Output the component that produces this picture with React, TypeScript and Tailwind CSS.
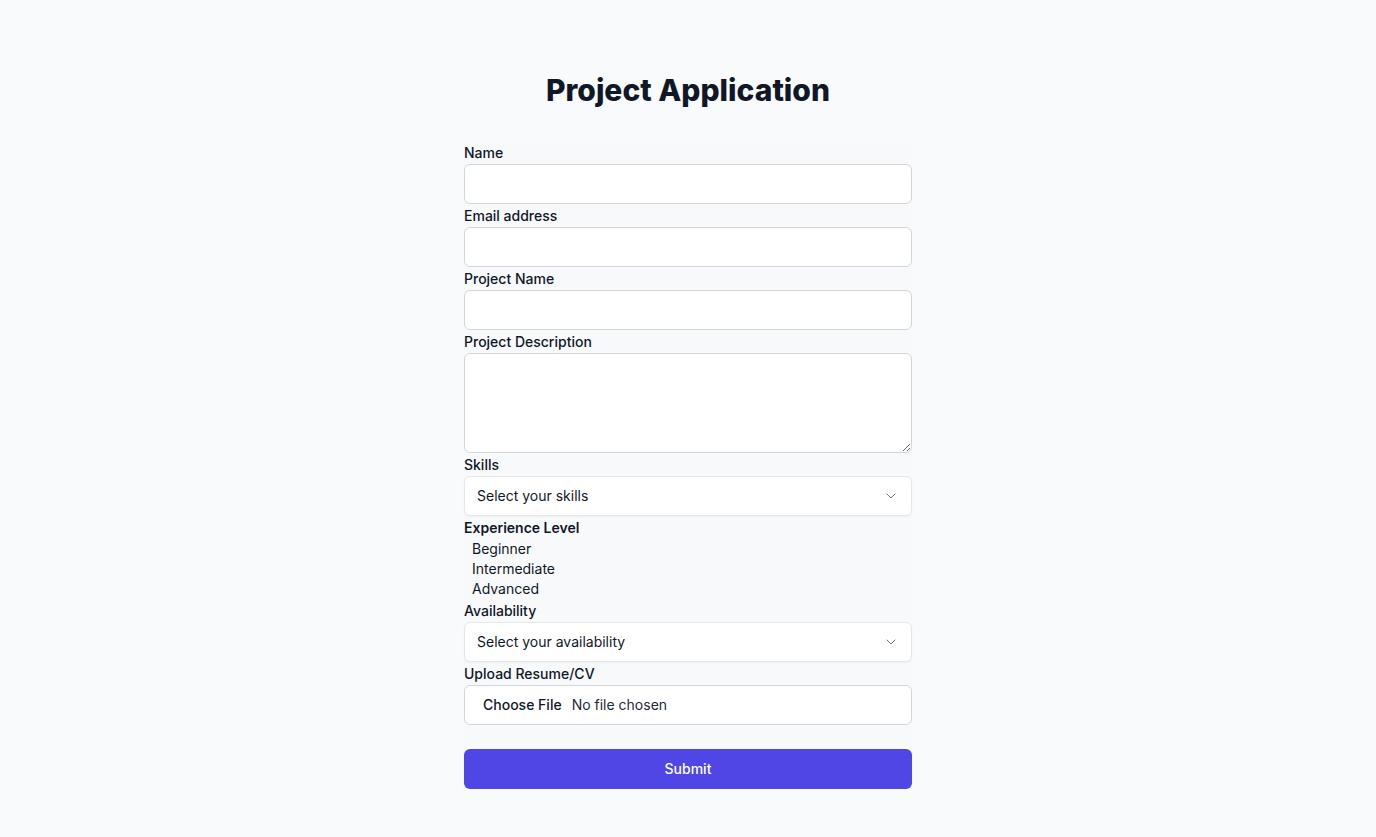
import React from 'react';
import { ChevronDown } from 'lucide-react';

const Field = ({ label, children }: { label: string; children: React.ReactNode }) => (
  <div className="mb-px">
    <label className="block pt-px text-sm leading-5 font-medium text-gray-900">{label}</label>
    <div className="mt-px">{children}</div>
  </div>
);

const FakeSelect = ({ text }: { text: string }) => (
  <div className="flex items-center justify-between h-10 px-3 bg-white border border-gray-200 rounded-md shadow-xs text-sm text-gray-900">
    <span>{text}</span>
    <ChevronDown className="w-4 h-4 text-gray-500" strokeWidth={1.5} />
  </div>
);

const App = () => {
  return (
    <div
      className="min-h-screen bg-[#f9fafb] pt-[72px] pb-12"
      style={{ fontFamily: 'Inter, "Noto Sans", sans-serif' }}
    >
      <h1 className="text-3xl leading-9 font-extrabold text-center text-gray-900">Project Application</h1>
      <form className="w-[448px] mx-auto mt-[34px] bg-[#f8f9fb]">
        <Field label="Name">
          <input type="text" className="block w-full h-10 bg-white border border-gray-300 rounded-md px-3 text-sm" />
        </Field>
        <Field label="Email address">
          <input type="email" className="block w-full h-10 bg-white border border-gray-300 rounded-md px-3 text-sm" />
        </Field>
        <Field label="Project Name">
          <input type="text" className="block w-full h-10 bg-white border border-gray-300 rounded-md px-3 text-sm" />
        </Field>
        <Field label="Project Description">
          <textarea className="block w-full h-[100px] bg-white border border-gray-300 rounded-md px-3 py-2 text-sm" />
        </Field>
        <Field label="Skills">
          <FakeSelect text="Select your skills" />
        </Field>
        <div className="mb-px">
          <div className="pt-px text-sm leading-5 font-semibold text-gray-900">Experience Level</div>
          <div className="pl-2 pt-px text-sm leading-5 text-gray-900">
            <div>Beginner</div>
            <div>Intermediate</div>
            <div>Advanced</div>
          </div>
        </div>
        <Field label="Availability">
          <FakeSelect text="Select your availability" />
        </Field>
        <Field label="Upload Resume/CV">
          <input
            type="file"
            className="block w-full h-10 bg-white border border-gray-300 rounded-md pl-1 text-sm text-gray-800 file:h-[38px] file:pl-[14px] file:pr-[10px] file:mr-0 file:border-0 file:bg-transparent file:text-sm file:font-medium file:text-gray-900"
          />
        </Field>
        <button
          type="button"
          className="w-full h-10 mt-[23px] rounded-md bg-[#4f46e5] text-white text-sm font-medium"
        >
          Submit
        </button>
      </form>
    </div>
  );
};

export default App;
